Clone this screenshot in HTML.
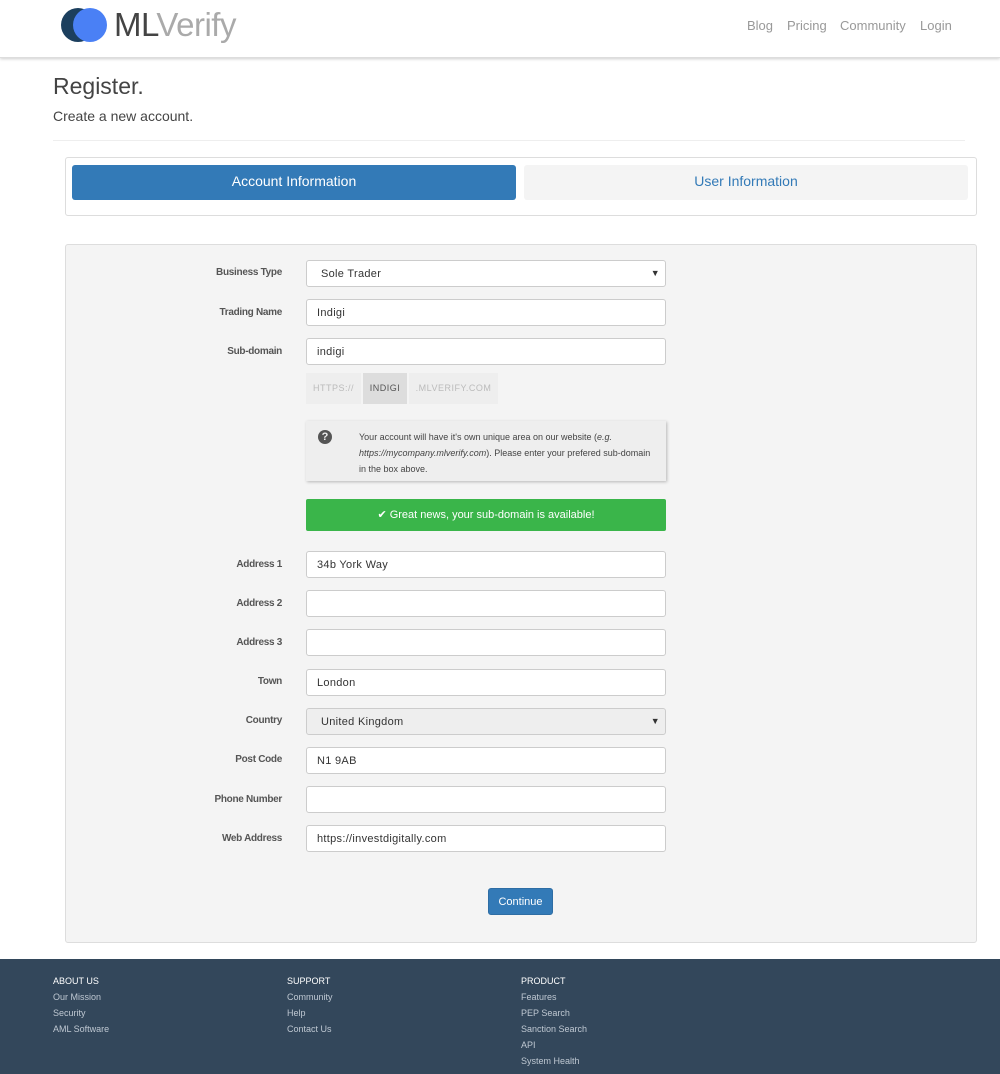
<!DOCTYPE html>
<html><head><meta charset="utf-8"><style>
*{box-sizing:border-box;margin:0;padding:0}
body{width:1000px;height:1074px;position:relative;background:#fff;font-family:"Liberation Sans",sans-serif;color:#333;overflow:hidden}
.a{position:absolute}
.hdr{left:0;top:0;width:1000px;height:58px;background:#fff;border-bottom:1px solid #ddd;box-shadow:0 1px 3px rgba(0,0,0,.2)}
.nav{top:18px;font-size:13px;color:#999}
.lbl{width:282px;left:0;text-align:right;font-size:10px;font-weight:600;color:#555;letter-spacing:-.3px}
.inp{left:306px;width:360px;height:27px;border:1px solid #ccc;border-radius:3px;background:#fff;font-size:11px;padding:7px 10px;color:#333;letter-spacing:.3px}
.sel{padding-left:14px}
.arr{position:absolute;right:5px;top:7px;font-size:9px;color:#333}
.ft{font-size:9px;color:#bfc8d2;line-height:16px}
.ft b{color:#fff;font-weight:normal;display:block}
</style></head><body>
<div class="a hdr"></div>
<div class="a" style="left:61px;top:8px;width:34px;height:34px;border-radius:50%;background:#1c3f5e"></div>
<div class="a" style="left:73px;top:8px;width:34px;height:34px;border-radius:50%;background:#4a80f5"></div>
<div class="a" style="left:114px;top:6px;font-size:33px;letter-spacing:-.5px"><span style="color:#444">ML</span><span style="color:#aaa">Verify</span></div>
<div class="a nav" style="left:747px">Blog</div>
<div class="a nav" style="left:787px">Pricing</div>
<div class="a nav" style="left:840px">Community</div>
<div class="a nav" style="left:920px">Login</div>

<div class="a" style="left:53px;top:73px;font-size:23px;color:#444">Register.</div>
<div class="a" style="left:53px;top:108px;font-size:14px;color:#444">Create a new account.</div>
<div class="a" style="left:53px;top:140px;width:912px;height:1px;background:#eee"></div>

<div class="a" style="left:65px;top:157px;width:912px;height:59px;border:1px solid #ddd;border-radius:3px"></div>
<div class="a" style="left:72px;top:165px;width:444px;height:35px;background:#337ab7;border-radius:3px;color:#fff;font-size:14px;text-align:center;line-height:32px">Account Information</div>
<div class="a" style="left:524px;top:165px;width:444px;height:35px;background:#f4f4f4;border-radius:3px;color:#337ab7;font-size:14px;text-align:center;line-height:32px">User Information</div>

<div class="a" style="left:65px;top:244px;width:912px;height:699px;background:#f4f4f4;border:1px solid #ddd;border-radius:3px"></div>

<div class="a lbl" style="top:267px">Business Type</div>
<div class="a inp sel" style="top:260px">Sole Trader<span class="arr">▼</span></div>
<div class="a lbl" style="top:307px">Trading Name</div>
<div class="a inp" style="top:299px">Indigi</div>
<div class="a lbl" style="top:346px">Sub-domain</div>
<div class="a inp" style="top:338px">indigi</div>

<div class="a" style="left:306px;top:373px;width:55px;height:31px;background:#eee;color:#bbb;font-size:9px;text-align:center;line-height:31px;letter-spacing:.5px">HTTPS://</div>
<div class="a" style="left:363px;top:373px;width:44px;height:31px;background:#ddd;color:#555;font-size:9px;text-align:center;line-height:31px;letter-spacing:.5px">INDIGI</div>
<div class="a" style="left:409px;top:373px;width:89px;height:31px;background:#eee;color:#bbb;font-size:9px;text-align:center;line-height:31px;letter-spacing:.5px">.MLVERIFY.COM</div>

<div class="a" style="left:306px;top:421px;width:360px;height:60px;background:#eee;box-shadow:1px 1px 3px rgba(0,0,0,.25)"></div>
<div class="a" style="left:318px;top:430px;width:14px;height:14px;border-radius:50%;background:#555;color:#eee;font-size:11px;font-weight:bold;text-align:center;line-height:14px">?</div>
<div class="a" style="left:359px;top:429px;width:300px;font-size:9px;line-height:16px;color:#444">Your account will have it's own unique area on our website (<i>e.g. https://mycompany.mlverify.com</i>). Please enter your prefered sub-domain in the box above.</div>

<div class="a" style="left:306px;top:499px;width:360px;height:32px;background:#3ab54a;border-radius:2px;color:#fff;font-size:11px;text-align:center;line-height:32px">✔ Great news, your sub-domain is available!</div>

<div class="a lbl" style="top:559px">Address 1</div>
<div class="a inp" style="top:551px">34b York Way</div>
<div class="a lbl" style="top:598px">Address 2</div>
<div class="a inp" style="top:590px"></div>
<div class="a lbl" style="top:637px">Address 3</div>
<div class="a inp" style="top:629px"></div>
<div class="a lbl" style="top:676px">Town</div>
<div class="a inp" style="top:669px">London</div>
<div class="a lbl" style="top:715px">Country</div>
<div class="a inp sel" style="top:708px;background:#eee">United Kingdom<span class="arr">▼</span></div>
<div class="a lbl" style="top:754px">Post Code</div>
<div class="a inp" style="top:747px">N1 9AB</div>
<div class="a lbl" style="top:794px">Phone Number</div>
<div class="a inp" style="top:786px"></div>
<div class="a lbl" style="top:833px">Web Address</div>
<div class="a inp" style="top:825px">https://investdigitally.com</div>

<div class="a" style="left:488px;top:888px;width:65px;height:27px;background:#337ab7;border:1px solid #2e6da4;border-radius:3px;color:#fff;font-size:11px;text-align:center;line-height:27px">Continue</div>

<div class="a" style="left:0;top:959px;width:1000px;height:115px;background:#33475b"></div>
<div class="a ft" style="left:53px;top:973px"><b>ABOUT US</b>Our Mission<br>Security<br>AML Software</div>
<div class="a ft" style="left:287px;top:973px"><b>SUPPORT</b>Community<br>Help<br>Contact Us</div>
<div class="a ft" style="left:521px;top:973px"><b>PRODUCT</b>Features<br>PEP Search<br>Sanction Search<br>API<br>System Health</div>
</body></html>
